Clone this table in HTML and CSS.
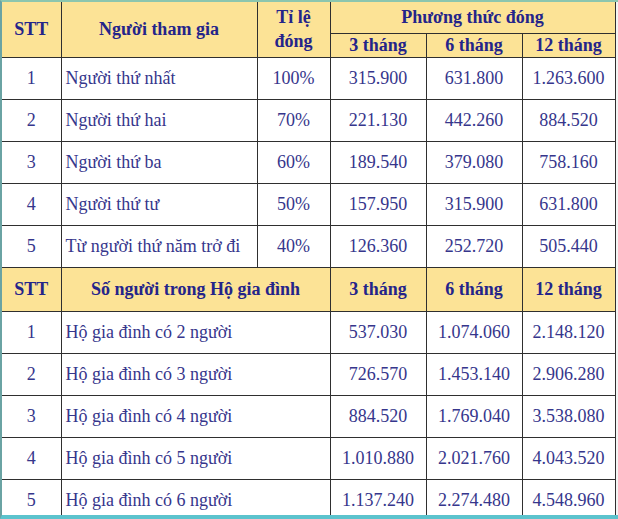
FILE: index.html
```html
<!DOCTYPE html>
<html lang="vi">
<head>
<meta charset="utf-8">
<title>Phương thức đóng</title>
<link rel="stylesheet" href="styles.css">
</head>
<body>
<div class="frame">
<table class="fees">
<colgroup>
<col class="c-stt"><col class="c-name"><col class="c-rate"><col class="c-m3"><col class="c-m6"><col class="c-m12">
</colgroup>
<thead>
<tr class="h1">
<th rowspan="2">STT</th>
<th rowspan="2">Người tham gia</th>
<th rowspan="2" class="rate">Tỉ lệ<br>đóng</th>
<th colspan="3">Phương thức đóng</th>
</tr>
<tr class="h2">
<th>3 tháng</th><th>6 tháng</th><th>12 tháng</th>
</tr>
</thead>
<tbody>
<tr class="row"><td>1</td><td class="name">Người thứ nhất</td><td>100%</td><td>315.900</td><td>631.800</td><td>1.263.600</td></tr>
<tr class="row"><td>2</td><td class="name">Người thứ hai</td><td>70%</td><td>221.130</td><td>442.260</td><td>884.520</td></tr>
<tr class="row"><td>3</td><td class="name">Người thứ ba</td><td>60%</td><td>189.540</td><td>379.080</td><td>758.160</td></tr>
<tr class="row"><td>4</td><td class="name">Người thứ tư</td><td>50%</td><td>157.950</td><td>315.900</td><td>631.800</td></tr>
<tr class="row"><td>5</td><td class="name">Từ người thứ năm trở đi</td><td>40%</td><td>126.360</td><td>252.720</td><td>505.440</td></tr>
<tr class="sub-head"><th>STT</th><th colspan="2">Số người trong Hộ gia đình</th><th>3 tháng</th><th>6 tháng</th><th>12 tháng</th></tr>
<tr class="row"><td>1</td><td class="name" colspan="2">Hộ gia đình có 2 người</td><td>537.030</td><td>1.074.060</td><td>2.148.120</td></tr>
<tr class="row"><td>2</td><td class="name" colspan="2">Hộ gia đình có 3 người</td><td>726.570</td><td>1.453.140</td><td>2.906.280</td></tr>
<tr class="row"><td>3</td><td class="name" colspan="2">Hộ gia đình có 4 người</td><td>884.520</td><td>1.769.040</td><td>3.538.080</td></tr>
<tr class="row"><td>4</td><td class="name" colspan="2">Hộ gia đình có 5 người</td><td>1.010.880</td><td>2.021.760</td><td>4.043.520</td></tr>
<tr class="row"><td>5</td><td class="name" colspan="2">Hộ gia đình có 6 người</td><td>1.137.240</td><td>2.274.480</td><td>4.548.960</td></tr>
</tbody>
</table>
</div>
</body>
</html>
```

FILE: styles.css
```css
html, body {
  margin: 0;
  padding: 0;
  background: #eef2f1;
}

.frame {
  box-sizing: border-box;
  width: 618px;
  height: 519px;
  overflow: hidden;
  border-top: 2px solid #8cc6ae;
  border-left: 2px solid #6aa3a3;
  border-bottom: 4px solid #5cc3cd;
  background: #f3f5f4;
}

.fees {
  border-collapse: collapse;
  table-layout: fixed;
  width: 613px;
  font-family: "Liberation Serif", "Times New Roman", serif;
  font-size: 18px;
  color: #36368c;
  background: #ffffff;
}

.c-stt { width: 59px; }
.c-name { width: 196px; }
.c-rate { width: 73px; }
.c-m3 { width: 96px; }
.c-m6 { width: 96px; }
.c-m12 { width: 93px; }

.fees th,
.fees td {
  border: 1px solid #2f2f2f;
  padding: 0 3px;
  text-align: center;
  vertical-align: middle;
  white-space: nowrap;
}

.fees th {
  background: #fce396;
  color: #24248a;
  font-weight: bold;
}

.fees thead tr:first-child th {
  border-top: none;
}

.fees tr > :first-child {
  border-left: none;
}

.h1 { height: 31px; }
.h2 { height: 24px; }
.h2 th { line-height: 22px; }

.rate { line-height: 24px; }

.row { height: 42px; }
.sub-head { height: 44px; }

.fees td.name {
  text-align: left;
  padding-left: 4px;
}
```
